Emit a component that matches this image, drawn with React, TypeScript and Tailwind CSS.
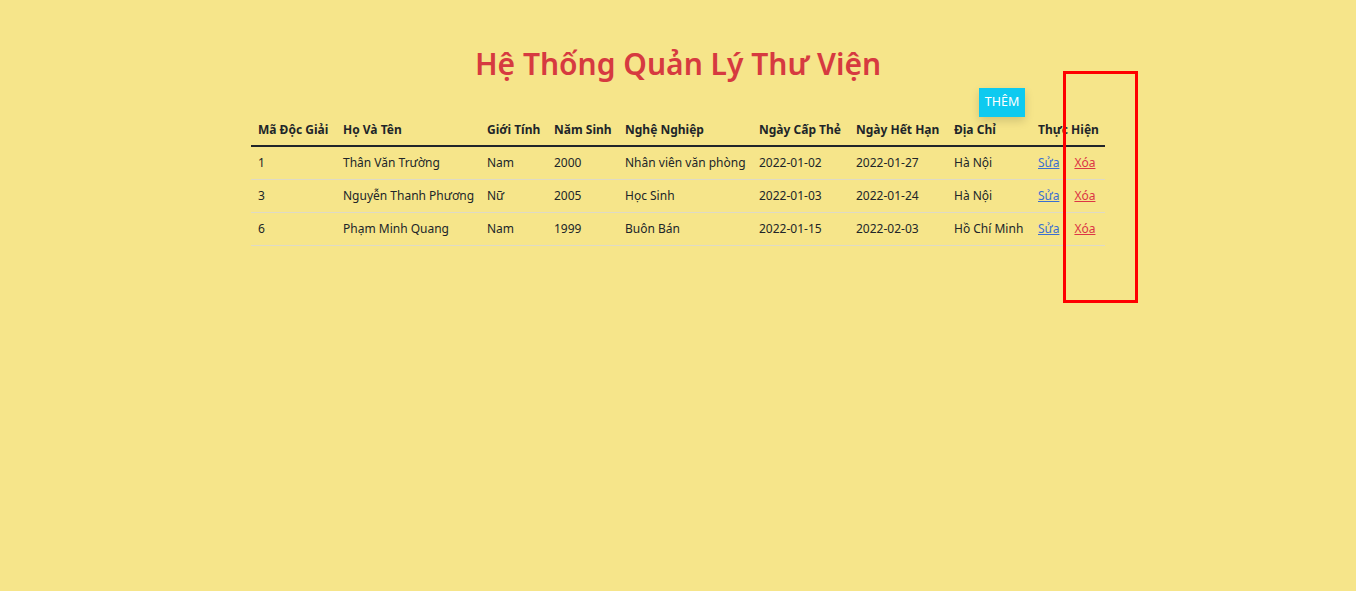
import React from 'react';

const readers = [
  { id: 1, name: "Thân Văn Trường", gender: "Nam", year: "2000", job: "Nhân viên văn phòng", issued: "2022-01-02", expires: "2022-01-27", addr: "Hà Nội" },
  { id: 3, name: "Nguyễn Thanh Phương", gender: "Nữ", year: "2005", job: "Học Sinh", issued: "2022-01-03", expires: "2022-01-24", addr: "Hà Nội" },
  { id: 6, name: "Phạm Minh Quang", gender: "Nam", year: "1999", job: "Buôn Bán", issued: "2022-01-15", expires: "2022-02-03", addr: "Hồ Chí Minh" },
];

const cols = [
  { label: "Mã Độc Giải", w: "w-[85px]" },
  { label: "Họ Và Tên", w: "w-[144px]" },
  { label: "Giới Tính", w: "w-[67px]" },
  { label: "Năm Sinh", w: "w-[71px]" },
  { label: "Nghệ Nghiệp", w: "w-[134px]" },
  { label: "Ngày Cấp Thẻ", w: "w-[97px]" },
  { label: "Ngày Hết Hạn", w: "w-[98px]" },
  { label: "Địa Chỉ", w: "w-[84px]" },
  { label: "Thực Hiện", w: "w-[74px]" },
];

const cell = "h-[33px] px-[7px] border-b border-[#dedac6] align-middle";

export default function App() {
  return (
    <div className="relative min-h-[591px] bg-[#f6e58a] font-['Noto_Sans',sans-serif] text-[#212529]">
      <div className="pt-[44px] flex flex-col items-center">
        <h1 className="h-[40px] leading-[40px] text-[30px] font-semibold text-[#d63a40]">
          Hệ Thống Quản Lý Thư Viện
        </h1>

        <div className="w-[854px]">
          <div className="flex justify-end pr-[80px] mt-[4px]">
            <button className="h-[29px] w-[46px] bg-[#0dcaf0] text-white text-[12.5px] shadow-[0_4px_10px_rgba(0,0,0,0.15)]">
              THÊM
            </button>
          </div>

          <table className="table-fixed w-[854px] border-separate border-spacing-0 text-[12px] leading-[18px] whitespace-nowrap">
            <thead>
              <tr>
                {cols.map((c) => (
                  <th key={c.label} className={`${c.w} h-[30px] px-[7px] pb-[2px] border-b-2 border-[#212529] text-left font-bold text-[12px]`}>
                    {c.label}
                  </th>
                ))}
              </tr>
            </thead>
            <tbody>
              {readers.map((r) => (
                <tr key={r.id}>
                  <td className={cell}>{r.id}</td>
                  <td className={cell}>{r.name}</td>
                  <td className={cell}>{r.gender}</td>
                  <td className={cell}>{r.year}</td>
                  <td className={cell}>{r.job}</td>
                  <td className={cell}>{r.issued}</td>
                  <td className={cell}>{r.expires}</td>
                  <td className={cell}>{r.addr}</td>
                  <td className={cell}>
                    <a href="#" className="underline text-[#3b6fd1]">Sửa</a>
                    <a href="#" className="underline text-[#dc3545] ml-[15px]">Xóa</a>
                  </td>
                </tr>
              ))}
            </tbody>
          </table>
        </div>
      </div>

      {/* annotation box drawn over the action column */}
      <div className="absolute left-[1063px] top-[71px] w-[75px] h-[232px] border-[3px] border-[#ff0000]" />
    </div>
  );
}
